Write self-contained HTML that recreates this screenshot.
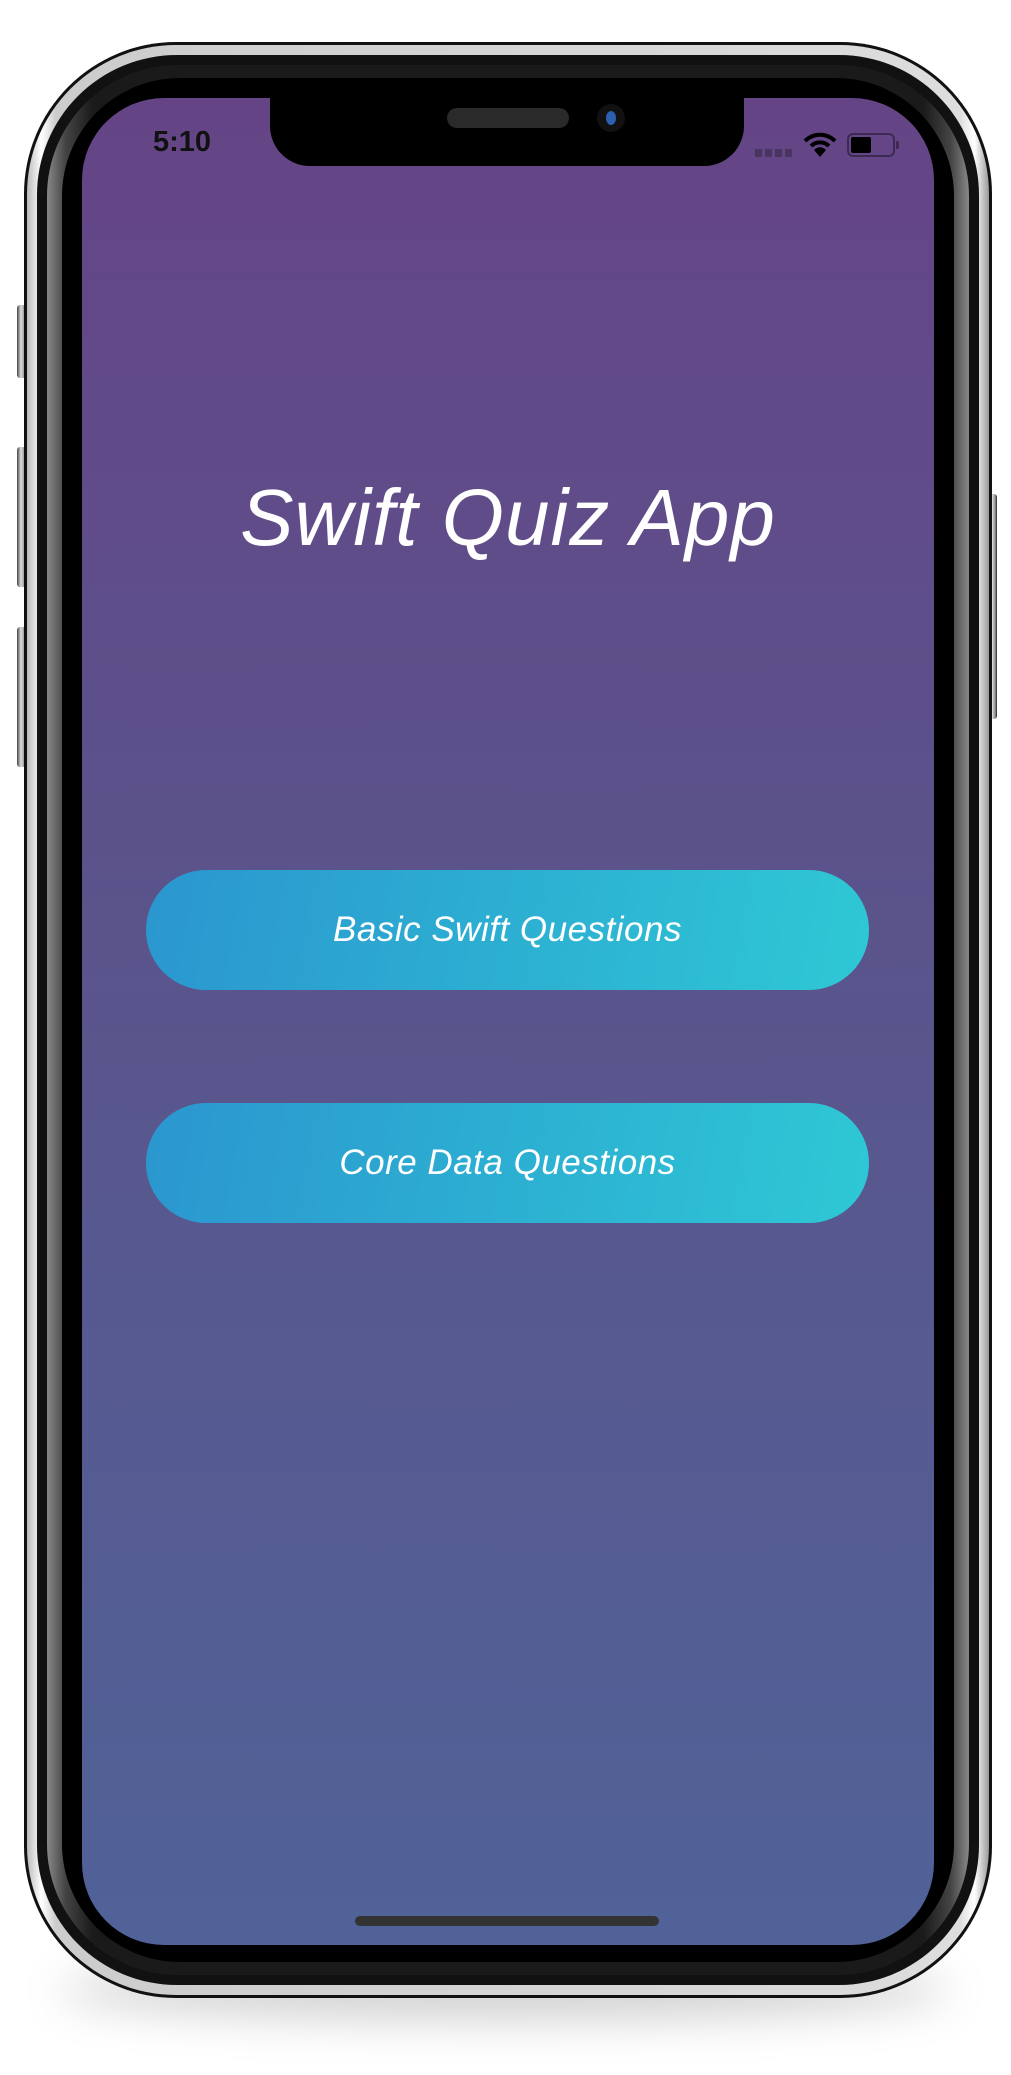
<!DOCTYPE html>
<html><head><meta charset="utf-8"><style>
html,body{margin:0;padding:0;background:#fff;}
body{width:1011px;height:2075px;position:relative;overflow:hidden;font-family:"Liberation Sans",sans-serif;}
.abs{position:absolute;box-sizing:border-box;}
.shadow{left:60px;top:1960px;width:890px;height:60px;border-radius:50%;background:rgba(0,0,0,0.18);filter:blur(22px);}
.btnside{background:linear-gradient(90deg,#444,#ddd 40%,#888 80%,#222);border-radius:3px;}
.l1{left:24px;top:42px;width:968px;height:1956px;border-radius:152px;background:#111;}
.l2{left:27px;top:45px;width:962px;height:1950px;border-radius:149px;background:linear-gradient(90deg,#bbb,#fff 1.5%,#ccc 3%,#ddd 97%,#fff 98.5%,#999);}
.l3{left:37px;top:55px;width:942px;height:1930px;border-radius:140px;background:#111;}
.l4{left:47px;top:65px;width:922px;height:1910px;border-radius:131px;background:linear-gradient(90deg,#888,#444 2%,#1a1a1a 5%,#1a1a1a 95%,#444 98%,#888);}
.l5{left:62px;top:78px;width:892px;height:1884px;border-radius:118px;background:#000;}
.screen{left:82px;top:98px;width:852px;height:1847px;border-radius:82px;overflow:hidden;background:linear-gradient(180deg,#654486 0%,#5a548b 45%,#506298 100%);}
.notch{left:270px;top:90px;width:474px;height:76px;background:#000;border-radius:0 0 40px 40px;}
.title{left:82px;top:472px;width:852px;text-align:center;color:#fff;font-style:italic;font-size:80px;font-weight:normal;letter-spacing:1px;}
.btn{left:146px;width:723px;height:120px;border-radius:60px;background:linear-gradient(100deg,#2b96cf,#2ec8d5);color:#fff;font-style:italic;font-size:35px;text-align:center;line-height:120px;letter-spacing:0.5px;}
.home{left:355px;top:1916px;width:304px;height:10px;border-radius:5px;background:#333;}
</style></head><body>
<div class="abs shadow"></div>
<div class="abs btnside" style="left:17px;top:305px;width:10px;height:73px"></div>
<div class="abs btnside" style="left:17px;top:447px;width:10px;height:140px"></div>
<div class="abs btnside" style="left:17px;top:627px;width:10px;height:140px"></div>
<div class="abs btnside" style="left:989px;top:494px;width:8px;height:225px"></div>
<div class="abs l1"></div>
<div class="abs l2"></div>
<div class="abs l3"></div>
<div class="abs l4"></div>
<div class="abs l5"></div>
<div class="abs screen"></div>
<div class="abs notch"></div>
<div class="abs" style="left:447px;top:108px;width:122px;height:20px;border-radius:10px;background:#2a2a2a;"></div>
<div class="abs" style="left:597px;top:104px;width:28px;height:28px;border-radius:50%;background:#111;"></div>
<div class="abs" style="left:606px;top:111px;width:10px;height:14px;border-radius:50%;background:#2b5fb0;"></div>
<div class="abs" style="left:153px;top:126px;font-size:29px;font-weight:bold;color:#111;">5:10</div>
<div class="abs" style="left:755px;top:149px;width:37px;height:8px;background:repeating-linear-gradient(90deg,#4a3560 0 7px,transparent 7px 10px);"></div>
<svg class="abs" style="left:803px;top:132px" width="34" height="26" viewBox="0 0 34 26">
<path d="M2 9 A21 21 0 0 1 32 9" stroke="#000" stroke-width="4" fill="none"/>
<path d="M8 14 A13 13 0 0 1 26 14" stroke="#000" stroke-width="4" fill="none"/>
<path d="M17 25 L11 18 A8 8 0 0 1 23 18 Z" fill="#000"/>
</svg>
<div class="abs" style="left:847px;top:133px;width:48px;height:24px;border:2px solid #3d2a52;border-radius:6px;"></div>
<div class="abs" style="left:851px;top:137px;width:20px;height:16px;background:#000;border-radius:2px;"></div>
<div class="abs" style="left:896px;top:141px;width:3px;height:8px;background:#3d2a52;border-radius:0 2px 2px 0;"></div>
<div class="abs title">Swift Quiz App</div>
<div class="abs btn" style="top:870px;">Basic Swift Questions</div>
<div class="abs btn" style="top:1103px;">Core Data Questions</div>
<div class="abs home"></div>
</body></html>
